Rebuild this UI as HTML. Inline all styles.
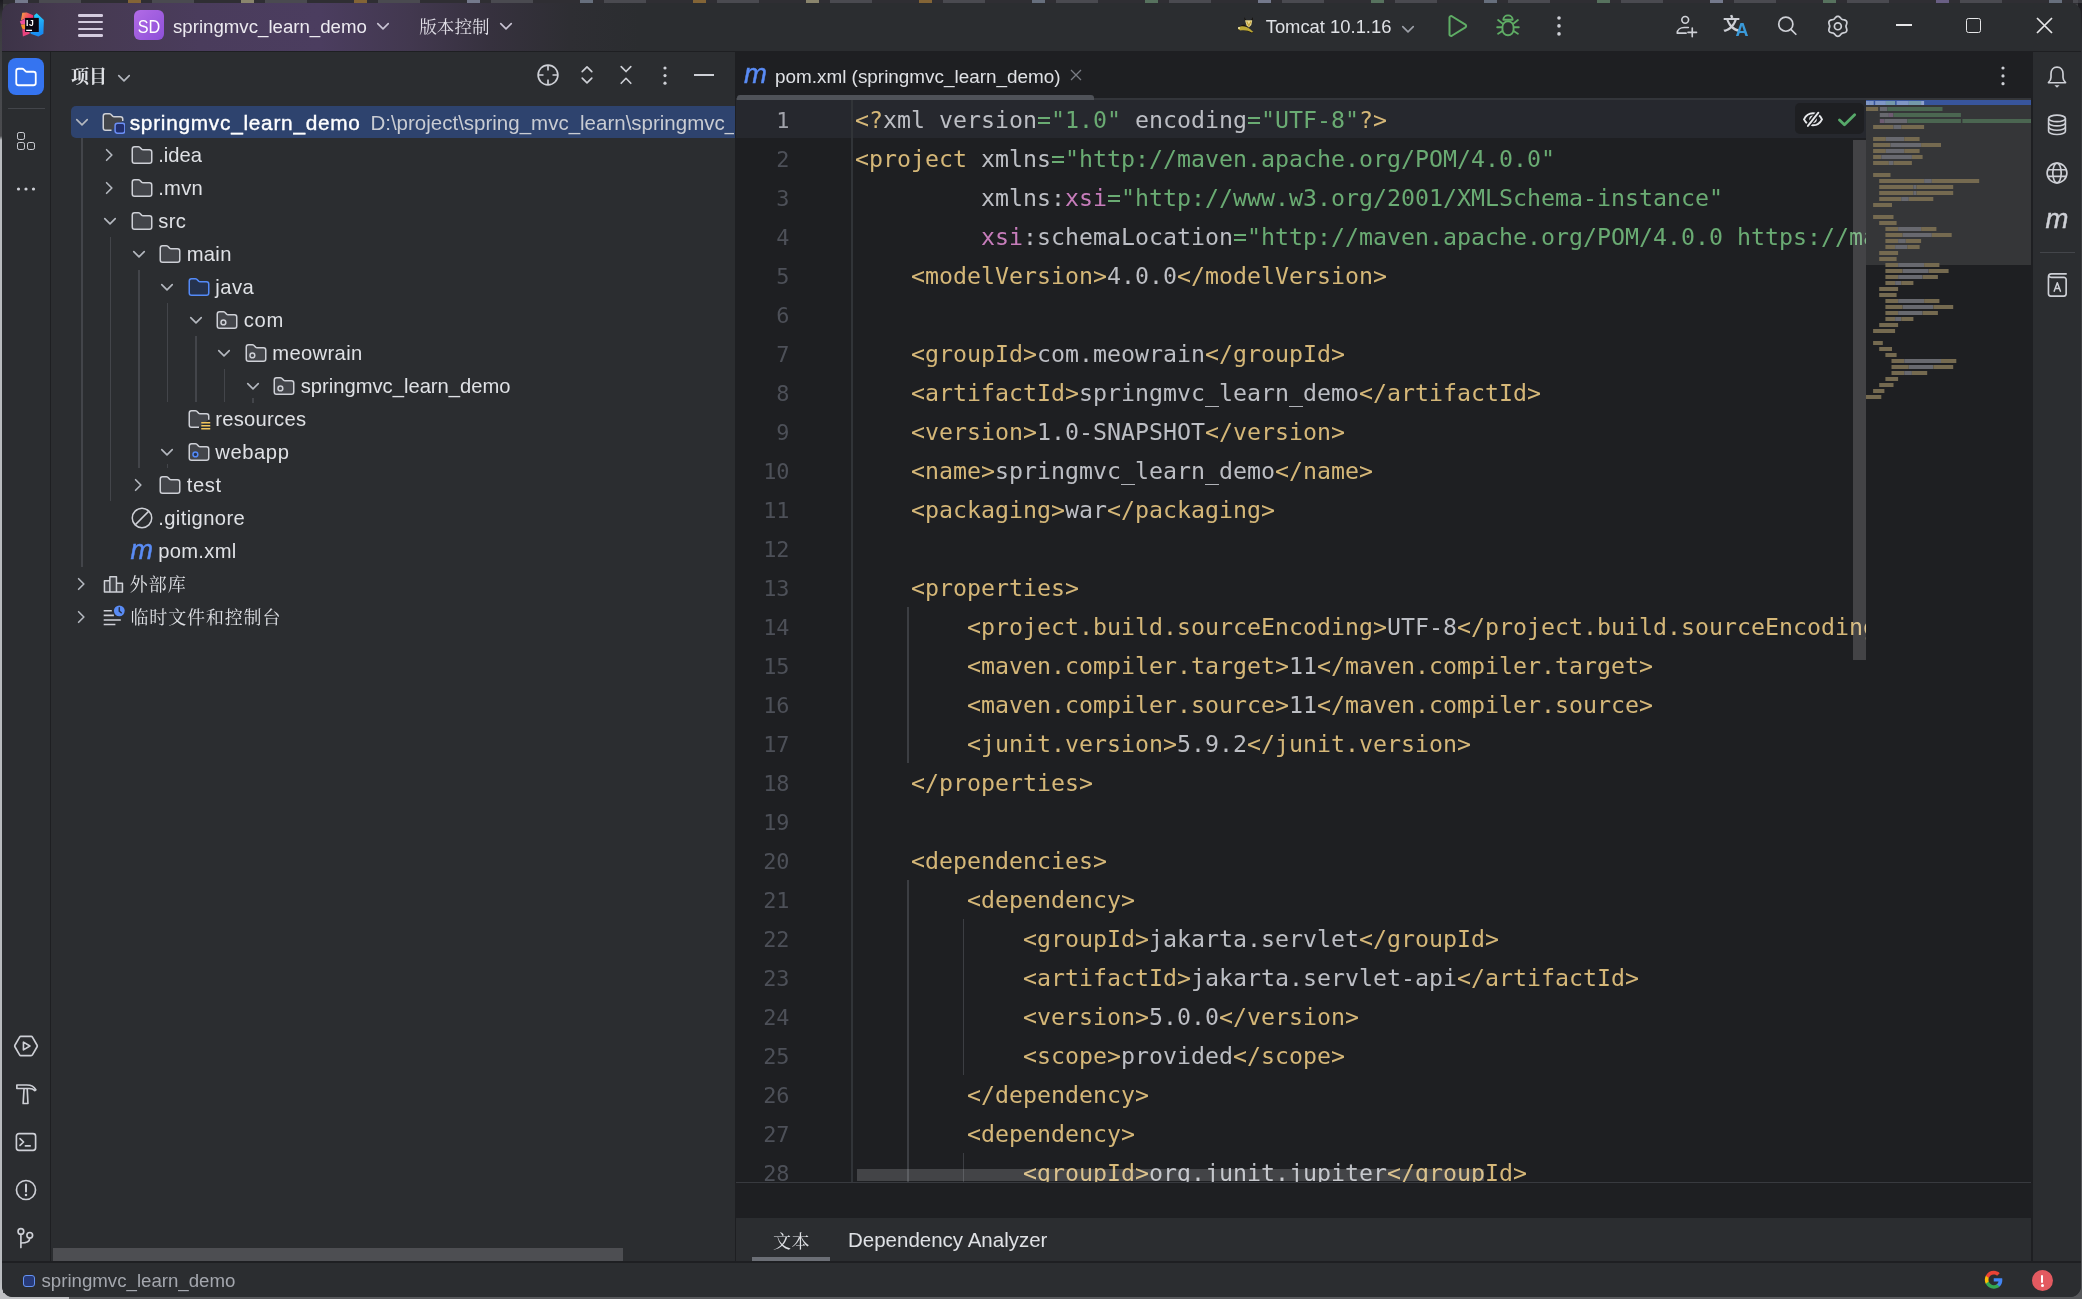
<!DOCTYPE html>
<html><head><meta charset="utf-8"><title>pom.xml - springmvc_learn_demo</title>
<style>
html,body{margin:0;padding:0;}
body{width:2082px;height:1299px;overflow:hidden;position:relative;background:#3e3f42;font-family:'Liberation Sans', 'Noto Serif CJK SC', sans-serif;}
div,span,svg{box-sizing:border-box;}
.abs{position:absolute;}
.t{position:absolute;white-space:pre;line-height:1;}
.win{position:absolute;left:2px;top:3px;width:2079px;height:1293.5px;border-radius:11px;background:#2B2D30;overflow:hidden;}
.code{position:absolute;left:855px;white-space:pre;font-family:'DejaVu Sans Mono', 'Liberation Mono', monospace;font-size:23.25px;letter-spacing:0.003px;height:39px;line-height:39px;color:#BCBEC4;}
.ln{position:absolute;left:736px;width:53.5px;text-align:right;font-family:'DejaVu Sans Mono', 'Liberation Mono', monospace;font-size:21.9px;height:39px;line-height:39px;color:#4B5059;}
.tg{color:#D5B778}.st{color:#6AAB73}.ns{color:#C77DBB}
.row{position:absolute;white-space:pre;font-size:20.2px;margin-left:-0.6px;color:#DFE1E5;line-height:33px;height:33px;}
</style></head><body>

<div class="abs" style="left:0;top:0;width:2082px;height:4px;background:#2f2e33"></div>
<div class="abs" style="left:0;top:0;width:3px;height:1299px;background:linear-gradient(180deg,#1c1b20 0,#3a3a3e 20px,#48494d 100px,#4a4b4e 136px,#b9bbbf 140px,#b9bbbf 1280px,#c8c9cc 1299px)"></div>
<div class="abs" style="left:0;top:1293px;width:70px;height:6px;background:#bfc0c3"></div>
<div class="abs" style="left:69px;top:1294px;width:2013px;height:5px;background:#57585b"></div>
<div class="abs" style="left:2078px;top:0;width:4px;height:1299px;background:linear-gradient(180deg,#1c1b20 0,#2d2e31 40px,#3a3b3e 160px,#57585b 1200px)"></div>
<div class="abs" style="left:15px;top:0;width:13px;height:2.5px;background:#b9c4e6;opacity:.5"></div>
<div class="abs" style="left:39px;top:0;width:42px;height:2.5px;background:#8a8a94;opacity:.3"></div>
<div class="abs" style="left:128px;top:0;width:13px;height:2.5px;background:#d89a3a;opacity:.5"></div>
<div class="abs" style="left:152px;top:0;width:42px;height:2.5px;background:#8a8a94;opacity:.3"></div>
<div class="abs" style="left:241px;top:0;width:13px;height:2.5px;background:#e6dca8;opacity:.5"></div>
<div class="abs" style="left:265px;top:0;width:42px;height:2.5px;background:#8a8a94;opacity:.3"></div>
<div class="abs" style="left:354px;top:0;width:13px;height:2.5px;background:#d89a3a;opacity:.5"></div>
<div class="abs" style="left:378px;top:0;width:42px;height:2.5px;background:#8a8a94;opacity:.3"></div>
<div class="abs" style="left:467px;top:0;width:13px;height:2.5px;background:#b9c4e6;opacity:.5"></div>
<div class="abs" style="left:491px;top:0;width:42px;height:2.5px;background:#8a8a94;opacity:.3"></div>
<div class="abs" style="left:580px;top:0;width:13px;height:2.5px;background:#9fb0c8;opacity:.5"></div>
<div class="abs" style="left:604px;top:0;width:42px;height:2.5px;background:#8a8a94;opacity:.3"></div>
<div class="abs" style="left:693px;top:0;width:13px;height:2.5px;background:#d89a3a;opacity:.5"></div>
<div class="abs" style="left:717px;top:0;width:42px;height:2.5px;background:#8a8a94;opacity:.3"></div>
<div class="abs" style="left:806px;top:0;width:13px;height:2.5px;background:#e6dca8;opacity:.5"></div>
<div class="abs" style="left:830px;top:0;width:42px;height:2.5px;background:#8a8a94;opacity:.3"></div>
<div class="abs" style="left:919px;top:0;width:13px;height:2.5px;background:#d89a3a;opacity:.5"></div>
<div class="abs" style="left:943px;top:0;width:42px;height:2.5px;background:#8a8a94;opacity:.3"></div>
<div class="abs" style="left:1032px;top:0;width:13px;height:2.5px;background:#9fb0c8;opacity:.5"></div>
<div class="abs" style="left:1056px;top:0;width:42px;height:2.5px;background:#8a8a94;opacity:.3"></div>
<div class="abs" style="left:1145px;top:0;width:13px;height:2.5px;background:#7fb58a;opacity:.5"></div>
<div class="abs" style="left:1169px;top:0;width:42px;height:2.5px;background:#8a8a94;opacity:.3"></div>
<div class="abs" style="left:1258px;top:0;width:13px;height:2.5px;background:#b9c4e6;opacity:.5"></div>
<div class="abs" style="left:1282px;top:0;width:42px;height:2.5px;background:#8a8a94;opacity:.3"></div>
<div class="abs" style="left:1371px;top:0;width:13px;height:2.5px;background:#7fb58a;opacity:.5"></div>
<div class="abs" style="left:1395px;top:0;width:42px;height:2.5px;background:#8a8a94;opacity:.3"></div>
<div class="abs" style="left:1484px;top:0;width:13px;height:2.5px;background:#9fb0c8;opacity:.5"></div>
<div class="abs" style="left:1508px;top:0;width:42px;height:2.5px;background:#8a8a94;opacity:.3"></div>
<div class="abs" style="left:1597px;top:0;width:13px;height:2.5px;background:#7fb58a;opacity:.5"></div>
<div class="abs" style="left:1621px;top:0;width:42px;height:2.5px;background:#8a8a94;opacity:.3"></div>
<div class="abs" style="left:1710px;top:0;width:13px;height:2.5px;background:#b9c4e6;opacity:.5"></div>
<div class="abs" style="left:1734px;top:0;width:42px;height:2.5px;background:#8a8a94;opacity:.3"></div>
<div class="abs" style="left:1823px;top:0;width:13px;height:2.5px;background:#7fb58a;opacity:.5"></div>
<div class="abs" style="left:1847px;top:0;width:42px;height:2.5px;background:#8a8a94;opacity:.3"></div>
<div class="abs" style="left:1936px;top:0;width:13px;height:2.5px;background:#a48fd6;opacity:.5"></div>
<div class="abs" style="left:1960px;top:0;width:42px;height:2.5px;background:#8a8a94;opacity:.3"></div>
<div class="abs" style="left:2049px;top:0;width:13px;height:2.5px;background:#9fb0c8;opacity:.5"></div>
<div class="abs" style="left:2073px;top:0;width:42px;height:2.5px;background:#8a8a94;opacity:.3"></div>
<div class="win">
<div class="abs" style="left:-2px;top:-3px;width:2082px;height:1299px;will-change:transform;">
<div class="abs" style="left:0;top:0;width:2082px;height:51px;background:linear-gradient(90deg,#3c3347 0,#45394f 60px,#4a3c5c 200px,#4b3d5f 320px,#42384f 410px,#36313e 490px,#2e2e33 570px,#2B2D30 640px)"></div>
<div class="abs" style="left:0;top:51px;width:2082px;height:1px;background:#1E1F22"></div>
<svg style="position:absolute;left:19px;top:11px;" width="27" height="27" viewBox="0 0 27 27" fill="none"><defs><linearGradient id="lgA" x1="0" y1="0" x2="1" y2="0.3"><stop offset="0" stop-color="#F9B03C"/><stop offset=".45" stop-color="#F4685A"/><stop offset="1" stop-color="#EE2F6E"/></linearGradient><linearGradient id="lgB" x1="0.3" y1="0" x2="0.5" y2="1"><stop offset="0" stop-color="#25D6FD"/><stop offset=".5" stop-color="#1EA4F6"/><stop offset="1" stop-color="#1787F0"/></linearGradient></defs><path d="M3.3 1.7L7.8 1.4L14.1 4.2V7.4H6.1L1.9 9.4Z" fill="url(#lgA)"/><path d="M0.8 10.5L6.3 7.8V13.4H2.2Z" fill="#F0509C"/><path d="M1.9 13.8L6.3 13.2V18.4L3.3 17.7Z" fill="#F7902E"/><path d="M3.3 18.2H6.3V20.8H10.6V22.7L3.9 25.5Z" fill="#E8447E"/><path d="M15.2 4.2L17.7 2.2L24.9 8.9L24.4 22.7L19.4 25.5L11.6 22.7V20.8H19.5V6.9H15.2Z" fill="url(#lgB)"/><rect x="6.1" y="6.9" width="13.6" height="14.1" fill="#0A0712"/><text x="7" y="14.5" font-family="Liberation Sans, sans-serif" font-weight="bold" font-size="8.6" letter-spacing=".5" fill="#fff">IJ</text><rect x="7.2" y="18.7" width="5.8" height="1.3" fill="#fff"/></svg>
<div class="abs" style="left:78px;top:14.3px;width:25px;height:2.4px;border-radius:1.2px;background:#d4ccdf"></div>
<div class="abs" style="left:78px;top:21.0px;width:25px;height:2.4px;border-radius:1.2px;background:#d4ccdf"></div>
<div class="abs" style="left:78px;top:27.8px;width:25px;height:2.4px;border-radius:1.2px;background:#d4ccdf"></div>
<div class="abs" style="left:78px;top:34.4px;width:25px;height:2.4px;border-radius:1.2px;background:#d4ccdf"></div>
<div class="abs" style="left:134px;top:10px;width:30px;height:29.5px;border-radius:6px;background:linear-gradient(135deg,#b26be6,#8d50d8)"></div>
<div class="t" style="left:134px;top:18px;width:30px;text-align:center;font-size:18px;letter-spacing:0px;color:#fff;transform:scaleX(.9);">SD</div>
<div class="t" style="left:173px;top:18px;font-size:18.66px;color:#ECEAF0;">springmvc_learn_demo</div>
<svg style="position:absolute;left:371.3px;top:13.5px;" width="24.0" height="24.0" viewBox="0 0 16 16" fill="none"><path d="M4.5 6.4L8 9.9L11.5 6.4" stroke="#c9c4d4" stroke-width="1.1" stroke-linecap="round" stroke-linejoin="round"/></svg>
<div class="t" style="left:419.2px;top:19.2px;font-size:17.6px;color:#E0DEE6;font-family:'Liberation Sans', 'Noto Serif CJK SC', serif">版本控制</div>
<svg style="position:absolute;left:494.0px;top:14.0px;" width="24.0" height="24.0" viewBox="0 0 16 16" fill="none"><path d="M4.5 6.4L8 9.9L11.5 6.4" stroke="#c9c4d4" stroke-width="1.1" stroke-linecap="round" stroke-linejoin="round"/></svg>
<svg style="position:absolute;left:1233px;top:16px;" width="22" height="20" viewBox="0 0 22 20" fill="none"><path d="M11 1L13.3 4.3H18L20 1L19.6 5L12 5Z" fill="#15110a"/><path d="M4.6 14.2C8 13.2 14 14.200 18.5 17.200L20.500 16.600L14 10.800L11 8.500L8 9.500Z" fill="#140e08" opacity=".85"/><path d="M5 11.700C7.800 9.800 11 9.900 13.500 11C16.200 12.300 18.700 14.300 20.400 15.900L18.600 16.500C15.500 14.500 11 13.700 7.600 14.500L5.400 13.600Z" fill="#BBA735"/><path d="M12 4.300H19.300L18.300 9L15.800 11.600L13.500 9.300Z" fill="#E6D88F"/><path d="M13.700 5.400L15.800 9.700L18 5.400" stroke="#C29E38" stroke-width="1.1" fill="none"/><circle cx="6" cy="11.900" r="1" fill="#EFE6B0"/></svg>
<div class="t" style="left:1265.7px;top:17.8px;font-size:18.4px;color:#DFE1E5;">Tomcat 10.1.16</div>
<svg style="position:absolute;left:1395.7px;top:16.5px;" width="24.0" height="24.0" viewBox="0 0 16 16" fill="none"><path d="M4.5 6.4L8 9.9L11.5 6.4" stroke="#9DA0A8" stroke-width="1.1" stroke-linecap="round" stroke-linejoin="round"/></svg>
<svg style="position:absolute;left:1442px;top:10.7px;" width="30" height="30" viewBox="0 0 20 20" fill="none"><path d="M5 4.4C5 3.6 5.85 3.1 6.55 3.5L15.6 9.1C16.25 9.5 16.25 10.5 15.6 10.9L6.55 16.5C5.85 16.9 5 16.4 5 15.6V4.4Z" stroke="#5FAD65" stroke-width="1.35" stroke-linejoin="round"/></svg>
<svg style="position:absolute;left:1493px;top:10px;" width="30" height="30" viewBox="0 0 20 20" fill="none"><path d="M6.900 6.500C6.900 4.800 8.300 3.600 10 3.600C11.700 3.600 13.100 4.800 13.100 6.500Z" stroke="#5FAD65" stroke-width="1.25" stroke-linejoin="round"/><rect x="6.300" y="7.500" width="7.400" height="9.300" rx="3.700" stroke="#5FAD65" stroke-width="1.25"/><path d="M3.400 6.700L6.100 8.800M16.600 6.700L13.900 8.800M2.800 11.500H5.800M17.200 11.500H14.200M3.400 15.800L6.300 14M16.600 15.800L13.700 14" stroke="#5FAD65" stroke-width="1.25" stroke-linecap="round"/></svg>
<svg style="position:absolute;left:1554.9px;top:13.7px;" width="8" height="23.900000000000002" viewBox="0 0 8 23.900000000000002" fill="none"><circle cx="4" cy="4.00" r="1.8" fill="#CED0D6"/><circle cx="4" cy="11.90" r="1.8" fill="#CED0D6"/><circle cx="4" cy="19.90" r="1.8" fill="#CED0D6"/></svg>
<svg style="position:absolute;left:1672px;top:11px;" width="30" height="30" viewBox="0 0 20 20" fill="none"><circle cx="8.8" cy="5.9" r="2.25" stroke="#CED0D6" stroke-width="1.1"/><path d="M9.4 14.75H3.5C3.5 12.5 5.5 11 8.2 11H10.9" stroke="#CED0D6" stroke-width="1.1" stroke-linecap="round" stroke-linejoin="round"/><path d="M13.5 11.4V17.1M10.65 14.25H16.35" stroke="#CED0D6" stroke-width="1.1" stroke-linecap="round"/></svg>
<div class="t" style="left:1723px;top:14px;font-size:17px;font-weight:bold;color:#CED0D6;font-family:'Noto Sans CJK SC',sans-serif;">文</div>
<div class="t" style="left:1735.5px;top:20.5px;font-size:18px;font-weight:bold;color:#3A9AD9;">A</div>
<svg style="position:absolute;left:1772px;top:11px;" width="30" height="30" viewBox="0 0 20 20" fill="none"><circle cx="9.2" cy="8.8" r="4.7" stroke="#CED0D6" stroke-width="1.15"/><path d="M12.6 12.2L15.9 15.5" stroke="#CED0D6" stroke-width="1.15" stroke-linecap="round"/></svg>
<svg style="position:absolute;left:1823px;top:10.5px;" width="30" height="30" viewBox="0 0 20 20" fill="none"><path d="M9.90 3.53 L10.33 3.59 L10.75 3.77 L11.13 4.03 L11.47 4.36 L11.77 4.70 L12.05 5.02 L12.32 5.29 L12.62 5.50 L12.94 5.65 L13.32 5.75 L13.73 5.83 L14.18 5.92 L14.63 6.05 L15.05 6.25 L15.41 6.52 L15.68 6.86 L15.84 7.27 L15.89 7.72 L15.85 8.18 L15.74 8.63 L15.60 9.07 L15.46 9.47 L15.37 9.84 L15.33 10.20 L15.37 10.56 L15.46 10.93 L15.60 11.33 L15.74 11.77 L15.85 12.22 L15.89 12.68 L15.84 13.13 L15.68 13.53 L15.41 13.88 L15.05 14.15 L14.63 14.35 L14.18 14.48 L13.73 14.57 L13.32 14.65 L12.94 14.75 L12.62 14.90 L12.32 15.11 L12.05 15.38 L11.77 15.70 L11.47 16.04 L11.13 16.37 L10.75 16.63 L10.33 16.81 L9.90 16.87 L9.47 16.81 L9.05 16.63 L8.67 16.37 L8.33 16.04 L8.03 15.70 L7.75 15.38 L7.48 15.11 L7.19 14.90 L6.86 14.75 L6.48 14.65 L6.07 14.57 L5.62 14.48 L5.17 14.35 L4.75 14.15 L4.39 13.88 L4.12 13.54 L3.96 13.13 L3.91 12.68 L3.95 12.22 L4.06 11.77 L4.20 11.33 L4.34 10.93 L4.43 10.56 L4.47 10.20 L4.43 9.84 L4.34 9.47 L4.20 9.07 L4.06 8.63 L3.95 8.18 L3.91 7.72 L3.96 7.27 L4.12 6.86 L4.39 6.52 L4.75 6.25 L5.17 6.05 L5.62 5.92 L6.07 5.83 L6.48 5.75 L6.86 5.65 L7.18 5.50 L7.48 5.29 L7.75 5.02 L8.03 4.70 L8.33 4.36 L8.67 4.03 L9.05 3.77 L9.47 3.59Z" stroke="#CED0D6" stroke-width="1.15" stroke-linejoin="round"/><circle cx="9.9" cy="10.2" r="2.3" stroke="#CED0D6" stroke-width="1.15"/></svg>
<div class="abs" style="left:1896px;top:24px;width:15.5px;height:1.7px;background:#E6E6E8"></div>
<div class="abs" style="left:1966px;top:18px;width:15px;height:15px;border:1.7px solid #E6E6E8;border-radius:2.5px"></div>
<svg style="position:absolute;left:2036px;top:17px;" width="17" height="17" viewBox="0 0 17 17" fill="none"><path d="M1 1L16 16M16 1L1 16" stroke="#E6E6E8" stroke-width="1.7"/></svg>
<div class="abs" style="left:0;top:52px;width:50px;height:1210px;background:#2B2D30"></div>
<div class="abs" style="left:50px;top:52px;width:1px;height:1210px;background:#1E1F22"></div>
<div class="abs" style="left:8px;top:58px;width:36px;height:36.5px;border-radius:8px;background:#3574F0"></div>
<svg style="position:absolute;left:11px;top:61.8px;" width="30" height="30" viewBox="0 0 20 20" fill="none"><path d="M3.5 6C3.5 5.17 4.17 4.5 5 4.5H7.5C7.85 4.5 8.2 4.65 8.45 4.9L9.6 6.05C9.85 6.3 10.2 6.5 10.6 6.5H15C15.83 6.5 16.5 7.17 16.5 8V14C16.5 14.83 15.83 15.5 15 15.5H5C4.17 15.5 3.5 14.83 3.5 14V6Z" stroke="#fff" stroke-width="1.2"/></svg>
<div class="abs" style="left:8px;top:107.5px;width:36.5px;height:1.5px;background:#43454A"></div>
<div class="abs" style="left:17px;top:132px;width:8.2px;height:8.2px;border:1.5px solid #CED0D6;border-radius:2.2px"></div>
<div class="abs" style="left:17px;top:142.3px;width:8.2px;height:8.2px;border:1.5px solid #CED0D6;border-radius:2.2px"></div>
<div class="abs" style="left:27.2px;top:142.3px;width:8.2px;height:8.2px;border:1.5px solid #CED0D6;border-radius:2.2px"></div>
<svg style="position:absolute;left:14px;top:184.9px;" width="24" height="8" viewBox="0 0 24 8" fill="none"><circle cx="4.5" cy="4" r="1.6" fill="#CED0D6"/><circle cx="12" cy="4" r="1.6" fill="#CED0D6"/><circle cx="19.5" cy="4" r="1.6" fill="#CED0D6"/></svg>
<svg style="position:absolute;left:11px;top:1031.3px;" width="30" height="30" viewBox="0 0 20 20" fill="none"><path d="M6.6 3.6H13.4C13.75 3.6 14.1 3.8 14.27 4.1L17.4 9.5C17.57 9.8 17.57 10.2 17.4 10.5L14.27 15.9C14.1 16.2 13.75 16.4 13.4 16.4H6.6C6.25 16.4 5.9 16.2 5.73 15.9L2.6 10.5C2.43 10.2 2.43 9.8 2.6 9.5L5.73 4.100C5.9 3.8 6.25 3.6 6.6 3.6Z" stroke="#CED0D6" stroke-width="1.1"/><path d="M8.3 7.4V12.6L12.6 10L8.3 7.4Z" stroke="#CED0D6" stroke-width="1.1" stroke-linejoin="round"/></svg>
<svg style="position:absolute;left:11px;top:1078.8px;" width="30" height="30" viewBox="0 0 20 20" fill="none"><path d="M3.9 6.35V4H10.6C13.4 4 15.5 5.2 16.6 7.2L15.9 7.7C14.9 6.7 13.6 6.35 12.2 6.35H3.9Z" stroke="#CED0D6" stroke-width="1.1" stroke-linejoin="round"/><path d="M8.7 6.35L8.1 16.3H11.3L10.8 6.35" stroke="#CED0D6" stroke-width="1.1" stroke-linejoin="round"/></svg>
<svg style="position:absolute;left:11px;top:1126.8px;" width="30" height="30" viewBox="0 0 20 20" fill="none"><rect x="3.6" y="4.45" width="12.8" height="11.1" rx="1.7" stroke="#CED0D6" stroke-width="1.1"/><path d="M6 7.7L8.4 10L6 12.300" stroke="#CED0D6" stroke-width="1.1" stroke-linecap="round" stroke-linejoin="round"/><path d="M9.6 12.6H12.8" stroke="#CED0D6" stroke-width="1.1" stroke-linecap="round"/></svg>
<svg style="position:absolute;left:11px;top:1174.6px;" width="30" height="30" viewBox="0 0 20 20" fill="none"><circle cx="10" cy="10" r="6.35" stroke="#CED0D6" stroke-width="1.1"/><path d="M10 6.3V11" stroke="#CED0D6" stroke-width="1.3" stroke-linecap="round"/><circle cx="10" cy="13.3" r=".85" fill="#CED0D6"/></svg>
<svg style="position:absolute;left:11px;top:1223.2px;" width="30" height="30" viewBox="0 0 20 20" fill="none"><circle cx="6.600" cy="5.600" r="1.9" stroke="#CED0D6" stroke-width="1.1"/><circle cx="12.5" cy="8.2" r="1.9" stroke="#CED0D6" stroke-width="1.1"/><path d="M6.600 7.500V16.400" stroke="#CED0D6" stroke-width="1.1" stroke-linecap="round"/><path d="M12.500 10.100C12.500 12.300 11 13.300 6.600 13.300" stroke="#CED0D6" stroke-width="1.1"/></svg>
<div class="abs" style="left:51px;top:52px;width:684px;height:1210px;background:#2B2D30"></div>
<div class="t" style="left:71px;top:68px;font-size:18px;color:#DFE1E5;font-family:'Liberation Sans', 'Noto Serif CJK SC', serif;font-weight:700">项目</div>
<svg style="position:absolute;left:112.3px;top:65.5px;" width="24.0" height="24.0" viewBox="0 0 16 16" fill="none"><path d="M4.5 6.4L8 9.9L11.5 6.4" stroke="#B4B8BF" stroke-width="1.1" stroke-linecap="round" stroke-linejoin="round"/></svg>
<svg style="position:absolute;left:533.2px;top:60px;" width="30" height="30" viewBox="0 0 20 20" fill="none"><circle cx="10" cy="10" r="6.6" stroke="#CED0D6" stroke-width="1.1"/><path d="M10 3.4V7M10 13V16.600M3.4 10H7M13 10H16.600" stroke="#CED0D6" stroke-width="1.1"/></svg>
<svg style="position:absolute;left:572px;top:60px;" width="30" height="30" viewBox="0 0 20 20" fill="none"><path d="M6.800 7.800L10 4.600L13.200 7.800M6.800 12.100L10 15.300L13.200 12.100" stroke="#CED0D6" stroke-width="1.1" stroke-linecap="round" stroke-linejoin="round"/></svg>
<svg style="position:absolute;left:611px;top:60px;" width="30" height="30" viewBox="0 0 20 20" fill="none"><path d="M6.800 4.400L10 7.700L13.200 4.400M6.800 15.500L10 12.200L13.200 15.500" stroke="#CED0D6" stroke-width="1.1" stroke-linecap="round" stroke-linejoin="round"/></svg>
<svg style="position:absolute;left:661.3px;top:63.599999999999994px;" width="8" height="23.200000000000003" viewBox="0 0 8 23.200000000000003" fill="none"><circle cx="4" cy="4.00" r="1.6" fill="#CED0D6"/><circle cx="4" cy="11.60" r="1.6" fill="#CED0D6"/><circle cx="4" cy="19.20" r="1.6" fill="#CED0D6"/></svg>
<div class="abs" style="left:694px;top:74px;width:19.5px;height:2px;background:#CED0D6"></div>
<div class="abs" style="left:70.5px;top:105.5px;width:665px;height:32.5px;border-radius:5px 0 0 5px;background:#2E436E"></div>
<div class="abs" style="left:81px;top:138px;width:1.5px;height:429px;background:#43454A"></div>
<div class="abs" style="left:109.5px;top:237px;width:1.5px;height:264px;background:#43454A"></div>
<div class="abs" style="left:138px;top:270px;width:1.5px;height:198px;background:#43454A"></div>
<div class="abs" style="left:166.5px;top:303px;width:1.5px;height:99px;background:#43454A"></div>
<div class="abs" style="left:195px;top:336px;width:1.5px;height:66px;background:#43454A"></div>
<div class="abs" style="left:223.5px;top:369px;width:1.5px;height:33px;background:#43454A"></div>
<div class="abs" style="left:252px;top:398px;width:1.5px;height:5px;background:#43454A"></div>
<div class="abs" style="left:166.5px;top:464px;width:1.5px;height:4px;background:#43454A"></div>
<svg style="position:absolute;left:69.70000000000002px;top:110.3px;" width="24.0" height="24.0" viewBox="0 0 16 16" fill="none"><path d="M4.5 6.4L8 9.9L11.5 6.4" stroke="#B4B8BF" stroke-width="1.1" stroke-linecap="round" stroke-linejoin="round"/></svg>
<svg style="position:absolute;left:101.30000000000001px;top:109.5px;" width="24" height="24" viewBox="0 0 16 16" fill="none"><path d="M7 13.5H3C2.17 13.5 1.5 12.83 1.5 12V4C1.5 3.17 2.17 2.5 3 2.5H5.55C5.9 2.5 6.25 2.63 6.5 2.87L7.75 4.1C8 4.36 8.35 4.5 8.7 4.5H13C13.83 4.5 14.5 5.17 14.5 6V7.4" fill="#43454A" stroke="#CED0D6"/><rect x="9.4" y="8.9" width="6.5" height="6.6" rx="1.6" fill="#22306E" stroke="#6B8EF5"/></svg>
<div class="row" style="left:130.3px;top:105.5px;"><span style="color:#fff;font-size:20.8px;letter-spacing:0.74px;-webkit-text-stroke:0.38px #fff">springmvc_learn_demo</span></div>
<svg style="position:absolute;left:97.30000000000001px;top:142.8px;" width="24.0" height="24.0" viewBox="0 0 16 16" fill="none"><path d="M6.4 4.5L9.9 8L6.4 11.5" stroke="#B4B8BF" stroke-width="1.1" stroke-linecap="round" stroke-linejoin="round"/></svg>
<svg style="position:absolute;left:129.8px;top:142.5px;" width="24" height="24" viewBox="0 0 16 16" fill="none"><path d="M1.5 4C1.5 3.17 2.17 2.5 3 2.5H5.55C5.9 2.5 6.25 2.63 6.5 2.87L7.75 4.1C8 4.36 8.35 4.5 8.7 4.5H13C13.83 4.5 14.5 5.17 14.5 6V12C14.5 12.83 13.83 13.5 13 13.5H3C2.17 13.5 1.5 12.83 1.5 12V4Z" fill="#43454A" stroke="#CED0D6"/></svg>
<div class="row" style="left:158.8px;top:138.5px;">.idea</div>
<svg style="position:absolute;left:97.30000000000001px;top:175.8px;" width="24.0" height="24.0" viewBox="0 0 16 16" fill="none"><path d="M6.4 4.5L9.9 8L6.4 11.5" stroke="#B4B8BF" stroke-width="1.1" stroke-linecap="round" stroke-linejoin="round"/></svg>
<svg style="position:absolute;left:129.8px;top:175.5px;" width="24" height="24" viewBox="0 0 16 16" fill="none"><path d="M1.5 4C1.5 3.17 2.17 2.5 3 2.5H5.55C5.9 2.5 6.25 2.63 6.5 2.87L7.75 4.1C8 4.36 8.35 4.5 8.7 4.5H13C13.83 4.5 14.5 5.17 14.5 6V12C14.5 12.83 13.83 13.5 13 13.5H3C2.17 13.5 1.5 12.83 1.5 12V4Z" fill="#43454A" stroke="#CED0D6"/></svg>
<div class="row" style="left:158.8px;top:171.5px;"><span style="letter-spacing:0.25px">.mvn</span></div>
<svg style="position:absolute;left:98.20000000000002px;top:209.3px;" width="24.0" height="24.0" viewBox="0 0 16 16" fill="none"><path d="M4.5 6.4L8 9.9L11.5 6.4" stroke="#B4B8BF" stroke-width="1.1" stroke-linecap="round" stroke-linejoin="round"/></svg>
<svg style="position:absolute;left:129.8px;top:208.5px;" width="24" height="24" viewBox="0 0 16 16" fill="none"><path d="M1.5 4C1.5 3.17 2.17 2.5 3 2.5H5.55C5.9 2.5 6.25 2.63 6.5 2.87L7.75 4.1C8 4.36 8.35 4.5 8.7 4.5H13C13.83 4.5 14.5 5.17 14.5 6V12C14.5 12.83 13.83 13.5 13 13.5H3C2.17 13.5 1.5 12.83 1.5 12V4Z" fill="#43454A" stroke="#CED0D6"/></svg>
<div class="row" style="left:158.8px;top:204.5px;"><span style="letter-spacing:0.35px">src</span></div>
<svg style="position:absolute;left:126.70000000000002px;top:242.3px;" width="24.0" height="24.0" viewBox="0 0 16 16" fill="none"><path d="M4.5 6.4L8 9.9L11.5 6.4" stroke="#B4B8BF" stroke-width="1.1" stroke-linecap="round" stroke-linejoin="round"/></svg>
<svg style="position:absolute;left:158.3px;top:241.5px;" width="24" height="24" viewBox="0 0 16 16" fill="none"><path d="M1.5 4C1.5 3.17 2.17 2.5 3 2.5H5.55C5.9 2.5 6.25 2.63 6.5 2.87L7.75 4.1C8 4.36 8.35 4.5 8.7 4.5H13C13.83 4.5 14.5 5.17 14.5 6V12C14.5 12.83 13.83 13.5 13 13.5H3C2.17 13.5 1.5 12.83 1.5 12V4Z" fill="#43454A" stroke="#CED0D6"/></svg>
<div class="row" style="left:187.3px;top:237.5px;"><span style="letter-spacing:0.3px">main</span></div>
<svg style="position:absolute;left:155.20000000000002px;top:275.3px;" width="24.0" height="24.0" viewBox="0 0 16 16" fill="none"><path d="M4.5 6.4L8 9.9L11.5 6.4" stroke="#B4B8BF" stroke-width="1.1" stroke-linecap="round" stroke-linejoin="round"/></svg>
<svg style="position:absolute;left:186.8px;top:274.5px;" width="24" height="24" viewBox="0 0 16 16" fill="none"><path d="M1.5 4C1.5 3.17 2.17 2.5 3 2.5H5.55C5.9 2.5 6.25 2.63 6.5 2.87L7.75 4.1C8 4.36 8.35 4.5 8.7 4.5H13C13.83 4.5 14.5 5.17 14.5 6V12C14.5 12.83 13.83 13.5 13 13.5H3C2.17 13.5 1.5 12.83 1.5 12V4Z" fill="#25324D" stroke="#548AF7"/></svg>
<div class="row" style="left:215.8px;top:270.5px;"><span style="letter-spacing:0.5px">java</span></div>
<svg style="position:absolute;left:183.70000000000002px;top:308.3px;" width="24.0" height="24.0" viewBox="0 0 16 16" fill="none"><path d="M4.5 6.4L8 9.9L11.5 6.4" stroke="#B4B8BF" stroke-width="1.1" stroke-linecap="round" stroke-linejoin="round"/></svg>
<svg style="position:absolute;left:215.3px;top:307.5px;" width="24" height="24" viewBox="0 0 16 16" fill="none"><path d="M1.5 4C1.5 3.17 2.17 2.5 3 2.5H5.55C5.9 2.5 6.25 2.63 6.5 2.87L7.75 4.1C8 4.36 8.35 4.5 8.7 4.5H13C13.83 4.5 14.5 5.17 14.5 6V12C14.5 12.83 13.83 13.5 13 13.5H3C2.17 13.5 1.5 12.83 1.5 12V4Z" fill="#43454A" stroke="#CED0D6"/><circle cx="5.6" cy="9.6" r="1.6" stroke="#CED0D6" fill="none"/></svg>
<div class="row" style="left:244.3px;top:303.5px;"><span style="letter-spacing:0.8px">com</span></div>
<svg style="position:absolute;left:212.20000000000002px;top:341.3px;" width="24.0" height="24.0" viewBox="0 0 16 16" fill="none"><path d="M4.5 6.4L8 9.9L11.5 6.4" stroke="#B4B8BF" stroke-width="1.1" stroke-linecap="round" stroke-linejoin="round"/></svg>
<svg style="position:absolute;left:243.8px;top:340.5px;" width="24" height="24" viewBox="0 0 16 16" fill="none"><path d="M1.5 4C1.5 3.17 2.17 2.5 3 2.5H5.55C5.9 2.5 6.25 2.63 6.5 2.87L7.75 4.1C8 4.36 8.35 4.5 8.7 4.5H13C13.83 4.5 14.5 5.17 14.5 6V12C14.5 12.83 13.83 13.5 13 13.5H3C2.17 13.5 1.5 12.83 1.5 12V4Z" fill="#43454A" stroke="#CED0D6"/><circle cx="5.6" cy="9.6" r="1.6" stroke="#CED0D6" fill="none"/></svg>
<div class="row" style="left:272.8px;top:336.5px;"><span style="letter-spacing:0.36px">meowrain</span></div>
<svg style="position:absolute;left:240.70000000000002px;top:374.3px;" width="24.0" height="24.0" viewBox="0 0 16 16" fill="none"><path d="M4.5 6.4L8 9.9L11.5 6.4" stroke="#B4B8BF" stroke-width="1.1" stroke-linecap="round" stroke-linejoin="round"/></svg>
<svg style="position:absolute;left:272.3px;top:373.5px;" width="24" height="24" viewBox="0 0 16 16" fill="none"><path d="M1.5 4C1.5 3.17 2.17 2.5 3 2.5H5.55C5.9 2.5 6.25 2.63 6.5 2.87L7.75 4.1C8 4.36 8.35 4.5 8.7 4.5H13C13.83 4.5 14.5 5.17 14.5 6V12C14.5 12.83 13.83 13.5 13 13.5H3C2.17 13.5 1.5 12.83 1.5 12V4Z" fill="#43454A" stroke="#CED0D6"/><circle cx="5.6" cy="9.6" r="1.6" stroke="#CED0D6" fill="none"/></svg>
<div class="row" style="left:301.3px;top:369.5px;">springmvc_learn_demo</div>
<svg style="position:absolute;left:186.8px;top:406.5px;" width="24" height="24" viewBox="0 0 16 16" fill="none"><path d="M8 13.5H3C2.17 13.5 1.5 12.83 1.5 12V4C1.5 3.17 2.17 2.5 3 2.5H5.55C5.9 2.5 6.25 2.63 6.5 2.87L7.75 4.1C8 4.36 8.35 4.5 8.7 4.5H13C13.83 4.5 14.5 5.17 14.5 6V8.5" fill="#43454A" stroke="#CED0D6"/><path d="M9.5 10.5H15.5M9.5 12.5H15.5M9.5 14.5H15.5" stroke="#F2C55C" stroke-width="1.1"/></svg>
<div class="row" style="left:215.8px;top:402.5px;"><span style="letter-spacing:0.27px">resources</span></div>
<svg style="position:absolute;left:155.20000000000002px;top:440.3px;" width="24.0" height="24.0" viewBox="0 0 16 16" fill="none"><path d="M4.5 6.4L8 9.9L11.5 6.4" stroke="#B4B8BF" stroke-width="1.1" stroke-linecap="round" stroke-linejoin="round"/></svg>
<svg style="position:absolute;left:186.8px;top:439.5px;" width="24" height="24" viewBox="0 0 16 16" fill="none"><path d="M1.5 4C1.5 3.17 2.17 2.5 3 2.5H5.55C5.9 2.5 6.25 2.63 6.5 2.87L7.75 4.1C8 4.36 8.35 4.5 8.7 4.5H13C13.83 4.5 14.5 5.17 14.5 6V12C14.5 12.83 13.83 13.5 13 13.5H3C2.17 13.5 1.5 12.83 1.5 12V4Z" fill="#43454A" stroke="#CED0D6"/><circle cx="5.6" cy="9.6" r="1.6" stroke="#548AF7" fill="#25324D"/></svg>
<div class="row" style="left:215.8px;top:435.5px;"><span style="letter-spacing:0.6px">webapp</span></div>
<svg style="position:absolute;left:125.80000000000001px;top:472.8px;" width="24.0" height="24.0" viewBox="0 0 16 16" fill="none"><path d="M6.4 4.5L9.9 8L6.4 11.5" stroke="#B4B8BF" stroke-width="1.1" stroke-linecap="round" stroke-linejoin="round"/></svg>
<svg style="position:absolute;left:158.3px;top:472.5px;" width="24" height="24" viewBox="0 0 16 16" fill="none"><path d="M1.5 4C1.5 3.17 2.17 2.5 3 2.5H5.55C5.9 2.5 6.25 2.63 6.5 2.87L7.75 4.1C8 4.36 8.35 4.5 8.7 4.5H13C13.83 4.5 14.5 5.17 14.5 6V12C14.5 12.83 13.83 13.5 13 13.5H3C2.17 13.5 1.5 12.83 1.5 12V4Z" fill="#43454A" stroke="#CED0D6"/></svg>
<div class="row" style="left:187.3px;top:468.5px;"><span style="letter-spacing:0.6px">test</span></div>
<svg style="position:absolute;left:129.8px;top:505.5px;" width="24" height="24" viewBox="0 0 16 16" fill="none"><circle cx="8" cy="8" r="6.5" stroke="#CED0D6"/><path d="M3.6 12.4L12.4 3.6" stroke="#CED0D6"/></svg>
<div class="row" style="left:158.8px;top:501.5px;"><span style="letter-spacing:0.4px">.gitignore</span></div>
<div class="t" style="left:130.60000000000002px;top:536.5px;font-size:27px;font-style:italic;color:#5A8CF5;-webkit-text-stroke:0.45px #5A8CF5;letter-spacing:-1px;line-height:27px;">m</div>
<div class="row" style="left:158.8px;top:534.5px;"><span style="letter-spacing:0.3px">pom.xml</span></div>
<svg style="position:absolute;left:68.80000000000001px;top:571.8px;" width="24.0" height="24.0" viewBox="0 0 16 16" fill="none"><path d="M6.4 4.5L9.9 8L6.4 11.5" stroke="#B4B8BF" stroke-width="1.1" stroke-linecap="round" stroke-linejoin="round"/></svg>
<svg style="position:absolute;left:101.30000000000001px;top:571.5px;" width="24" height="24" viewBox="0 0 16 16" fill="none"><path d="M2.3 13.3V5.9H5.9V13.3Z M5.9 13.3V3.2H10.3V13.3Z M10.3 13.3V7.5H14.3V13.3Z" fill="#43454A" stroke="#CED0D6" stroke-linejoin="round"/></svg>
<div class="row" style="left:130.3px;top:567.5px;"><span style="font-family:'Liberation Sans', 'Noto Serif CJK SC', serif;font-size:18px;letter-spacing:1px">外部库</span></div>
<svg style="position:absolute;left:68.80000000000001px;top:604.8px;" width="24.0" height="24.0" viewBox="0 0 16 16" fill="none"><path d="M6.4 4.5L9.9 8L6.4 11.5" stroke="#B4B8BF" stroke-width="1.1" stroke-linecap="round" stroke-linejoin="round"/></svg>
<svg style="position:absolute;left:101.30000000000001px;top:604.5px;" width="24" height="24" viewBox="0 0 16 16" fill="none"><path d="M1.8 3.8H7.2M1.8 6.9H8.6M1.8 10H13.2M1.8 13H9.6" stroke="#CED0D6" stroke-width="1.1"/><circle cx="12.2" cy="3.9" r="3.6" fill="#5A8CF5"/><path d="M12.2 1.9V4.1L13.5 5.2" stroke="#25324D" stroke-width="1" stroke-linecap="round" fill="none"/></svg>
<div class="row" style="left:130.3px;top:600.5px;"><span style="font-family:'Liberation Sans', 'Noto Serif CJK SC', serif;font-size:18px;letter-spacing:.85px;margin-left:.8px">临时文件和控制台</span></div>
<div class="row" style="left:371px;top:105.5px;width:364px;overflow:hidden;color:#C9CCD3;font-size:20.5px">D:\project\spring_mvc_learn\springmvc_learn_demo</div>
<div class="abs" style="left:53px;top:1248px;width:570px;height:12.5px;background:#4D4E52"></div>
<div class="abs" style="left:735px;top:52px;width:1.5px;height:1210px;background:#1E1F22"></div>
<div class="abs" style="left:736px;top:52px;width:1296px;height:1210px;background:#1E1F22"></div>
<div class="t" style="left:744px;top:60px;font-size:27.5px;font-style:italic;color:#5A8CF5;-webkit-text-stroke:0.45px #5A8CF5;line-height:27.5px;letter-spacing:-1px">m</div>
<div class="t" style="left:775px;top:67.5px;font-size:18.9px;color:#DFE1E5;">pom.xml (springmvc_learn_demo)</div>
<svg style="position:absolute;left:1069px;top:68px;" width="14" height="14" viewBox="0 0 14 14" fill="none"><path d="M2 2L12 12M12 2L2 12" stroke="#7A7D85" stroke-width="1.3"/></svg>
<div class="abs" style="left:736px;top:98px;width:1296px;height:2px;background:#33353A"></div>
<div class="abs" style="left:737px;top:94.5px;width:357px;height:5.5px;border-radius:3px 3px 0 0;background:#4F5258"></div>
<svg style="position:absolute;left:1998.6px;top:63.599999999999994px;" width="8" height="23.700000000000003" viewBox="0 0 8 23.700000000000003" fill="none"><circle cx="4" cy="4.00" r="1.6" fill="#CED0D6"/><circle cx="4" cy="11.90" r="1.6" fill="#CED0D6"/><circle cx="4" cy="19.70" r="1.6" fill="#CED0D6"/></svg>
<div class="abs" style="left:736px;top:100px;width:1130px;height:1082px;overflow:hidden;">
<div class="abs" style="left:-736px;top:-100px;width:2082px;height:1299px;">
<div class="abs" style="left:736px;top:100px;width:1130px;height:38px;background:#26282E"></div>
<div class="abs" style="left:851px;top:100px;width:1.5px;height:1082px;background:#313438"></div>
<div class="abs" style="left:906.8px;top:607px;width:1.8px;height:156px;background:#3C3E43"></div>
<div class="abs" style="left:906.8px;top:880px;width:1.8px;height:302px;background:#3C3E43"></div>
<div class="abs" style="left:962.5px;top:919px;width:1.8px;height:156px;background:#3C3E43"></div>
<div class="abs" style="left:962.5px;top:1153px;width:1.8px;height:29px;background:#3C3E43"></div>
<div class="ln" style="top:100.5px;color:#A1A3AB">1</div>
<div class="code" style="top:100px"><span class="tg">&lt;?</span>xml version<span class="st">=&quot;1.0&quot;</span> encoding<span class="st">=&quot;UTF-8&quot;</span><span class="tg">?&gt;</span></div>
<div class="ln" style="top:139.5px;color:#4D5058">2</div>
<div class="code" style="top:139px"><span class="tg">&lt;project</span> xmlns<span class="st">=&quot;http://maven.apache.org/POM/4.0.0&quot;</span></div>
<div class="ln" style="top:178.5px;color:#4D5058">3</div>
<div class="code" style="top:178px">         xmlns:<span class="ns">xsi</span><span class="st">=&quot;http://www.w3.org/2001/XMLSchema-instance&quot;</span></div>
<div class="ln" style="top:217.5px;color:#4D5058">4</div>
<div class="code" style="top:217px">         <span class="ns">xsi</span>:schemaLocation<span class="st">=&quot;http://maven.apache.org/POM/4.0.0 https://maven.apache.org/xsd/maven-4.0.0.xsd&quot;</span><span class="tg">&gt;</span></div>
<div class="ln" style="top:256.5px;color:#4D5058">5</div>
<div class="code" style="top:256px">    <span class="tg">&lt;modelVersion&gt;</span>4.0.0<span class="tg">&lt;/modelVersion&gt;</span></div>
<div class="ln" style="top:295.5px;color:#4D5058">6</div>
<div class="ln" style="top:334.5px;color:#4D5058">7</div>
<div class="code" style="top:334px">    <span class="tg">&lt;groupId&gt;</span>com.meowrain<span class="tg">&lt;/groupId&gt;</span></div>
<div class="ln" style="top:373.5px;color:#4D5058">8</div>
<div class="code" style="top:373px">    <span class="tg">&lt;artifactId&gt;</span>springmvc_learn_demo<span class="tg">&lt;/artifactId&gt;</span></div>
<div class="ln" style="top:412.5px;color:#4D5058">9</div>
<div class="code" style="top:412px">    <span class="tg">&lt;version&gt;</span>1.0-SNAPSHOT<span class="tg">&lt;/version&gt;</span></div>
<div class="ln" style="top:451.5px;color:#4D5058">10</div>
<div class="code" style="top:451px">    <span class="tg">&lt;name&gt;</span>springmvc_learn_demo<span class="tg">&lt;/name&gt;</span></div>
<div class="ln" style="top:490.5px;color:#4D5058">11</div>
<div class="code" style="top:490px">    <span class="tg">&lt;packaging&gt;</span>war<span class="tg">&lt;/packaging&gt;</span></div>
<div class="ln" style="top:529.5px;color:#4D5058">12</div>
<div class="ln" style="top:568.5px;color:#4D5058">13</div>
<div class="code" style="top:568px">    <span class="tg">&lt;properties&gt;</span></div>
<div class="ln" style="top:607.5px;color:#4D5058">14</div>
<div class="code" style="top:607px">        <span class="tg">&lt;project.build.sourceEncoding&gt;</span>UTF-8<span class="tg">&lt;/project.build.sourceEncoding&gt;</span></div>
<div class="ln" style="top:646.5px;color:#4D5058">15</div>
<div class="code" style="top:646px">        <span class="tg">&lt;maven.compiler.target&gt;</span>11<span class="tg">&lt;/maven.compiler.target&gt;</span></div>
<div class="ln" style="top:685.5px;color:#4D5058">16</div>
<div class="code" style="top:685px">        <span class="tg">&lt;maven.compiler.source&gt;</span>11<span class="tg">&lt;/maven.compiler.source&gt;</span></div>
<div class="ln" style="top:724.5px;color:#4D5058">17</div>
<div class="code" style="top:724px">        <span class="tg">&lt;junit.version&gt;</span>5.9.2<span class="tg">&lt;/junit.version&gt;</span></div>
<div class="ln" style="top:763.5px;color:#4D5058">18</div>
<div class="code" style="top:763px">    <span class="tg">&lt;/properties&gt;</span></div>
<div class="ln" style="top:802.5px;color:#4D5058">19</div>
<div class="ln" style="top:841.5px;color:#4D5058">20</div>
<div class="code" style="top:841px">    <span class="tg">&lt;dependencies&gt;</span></div>
<div class="ln" style="top:880.5px;color:#4D5058">21</div>
<div class="code" style="top:880px">        <span class="tg">&lt;dependency&gt;</span></div>
<div class="ln" style="top:919.5px;color:#4D5058">22</div>
<div class="code" style="top:919px">            <span class="tg">&lt;groupId&gt;</span>jakarta.servlet<span class="tg">&lt;/groupId&gt;</span></div>
<div class="ln" style="top:958.5px;color:#4D5058">23</div>
<div class="code" style="top:958px">            <span class="tg">&lt;artifactId&gt;</span>jakarta.servlet-api<span class="tg">&lt;/artifactId&gt;</span></div>
<div class="ln" style="top:997.5px;color:#4D5058">24</div>
<div class="code" style="top:997px">            <span class="tg">&lt;version&gt;</span>5.0.0<span class="tg">&lt;/version&gt;</span></div>
<div class="ln" style="top:1036.5px;color:#4D5058">25</div>
<div class="code" style="top:1036px">            <span class="tg">&lt;scope&gt;</span>provided<span class="tg">&lt;/scope&gt;</span></div>
<div class="ln" style="top:1075.5px;color:#4D5058">26</div>
<div class="code" style="top:1075px">        <span class="tg">&lt;/dependency&gt;</span></div>
<div class="ln" style="top:1114.5px;color:#4D5058">27</div>
<div class="code" style="top:1114px">        <span class="tg">&lt;dependency&gt;</span></div>
<div class="ln" style="top:1153.5px;color:#4D5058">28</div>
<div class="code" style="top:1153px">            <span class="tg">&lt;groupId&gt;</span>org.junit.jupiter<span class="tg">&lt;/groupId&gt;</span></div>
<div class="abs" style="left:857px;top:1169px;width:627px;height:12.3px;background:rgba(255,255,255,0.17)"></div>
</div></div>
<div class="abs" style="left:736px;top:1182px;width:1296px;height:1.2px;background:#383A3F"></div>
<div class="abs" style="left:1853px;top:140px;width:12.5px;height:519.5px;background:rgba(255,255,255,0.165)"></div>
<div class="abs" style="left:1795px;top:103px;width:68.5px;height:31px;border-radius:5px;background:#1E1F22"></div>
<svg style="position:absolute;left:1801px;top:107px;" width="24" height="24" viewBox="0 0 16 16" fill="none"><path d="M2 8.2C3.3 5.6 5.5 4.2 8 4.2C10.500 4.2 12.700 5.6 14 8.2C12.700 10.800 10.500 12.200 8 12.200C5.500 12.200 3.300 10.800 2 8.200Z" stroke="#E8E9EC" stroke-width="1.25"/><circle cx="8" cy="8.2" r="2" stroke="#E8E9EC" stroke-width="1.1"/><path d="M4.2 13L11.900 3.400" stroke="#1E1F22" stroke-width="3.2"/><path d="M4.600 12.600L11.600 3.800" stroke="#E8E9EC" stroke-width="1.25" stroke-linecap="round"/></svg>
<svg style="position:absolute;left:1834.5px;top:107px;" width="24" height="24" viewBox="0 0 16 16" fill="none"><path d="M3 8.700L6.300 11.800L13.100 5.100" stroke="#57A96A" stroke-width="1.9" stroke-linecap="round" stroke-linejoin="round"/></svg>
<div class="abs" style="left:1866px;top:99px;width:166px;height:166px;background:#353638"></div>
<div class="abs" style="left:1866px;top:99.5px;width:166px;height:5.5px;background:#38559C"></div>
<svg style="position:absolute;left:1866px;top:99px;" width="166" height="310" viewBox="0 0 166 310" fill="none"><rect x="0" y="2" width="3.1" height="4" fill="#8097C6"/><rect x="3.1" y="2" width="4.6" height="4" fill="#8097C6"/><rect x="9.2" y="2" width="10.7" height="4" fill="#8097C6"/><rect x="19.9" y="2" width="9.200000000000003" height="4" fill="#7499AA"/><rect x="30.6" y="2" width="12.199999999999996" height="4" fill="#8097C6"/><rect x="42.8" y="2" width="12.300000000000004" height="4" fill="#7499AA"/><rect x="55.1" y="2" width="3.0" height="4" fill="#8EA2CE"/><rect x="0" y="8" width="12.2" height="4" fill="#756A50"/><rect x="13.8" y="8" width="7.599999999999998" height="4" fill="#68696F"/><rect x="21.4" y="8" width="55.1" height="4" fill="#4B6651"/><rect x="13.8" y="14" width="9.099999999999998" height="4" fill="#68696F"/><rect x="22.9" y="14" width="4.600000000000001" height="4" fill="#6E5C72"/><rect x="27.5" y="14" width="67.4" height="4" fill="#4B6651"/><rect x="13.8" y="20" width="4.599999999999998" height="4" fill="#6E5C72"/><rect x="18.4" y="20" width="22.9" height="4" fill="#68696F"/><rect x="41.3" y="20" width="53.60000000000001" height="4" fill="#4B6651"/><rect x="96.4" y="20" width="69.6" height="4" fill="#4B6651"/><rect x="7.1" y="26" width="20.4" height="4" fill="#756A50"/><rect x="27.5" y="26" width="7.700000000000003" height="4" fill="#68696F"/><rect x="35.2" y="26" width="22.9" height="4" fill="#756A50"/><rect x="7.1" y="38" width="12.799999999999999" height="4" fill="#756A50"/><rect x="19.9" y="38" width="18.300000000000004" height="4" fill="#68696F"/><rect x="38.2" y="38" width="15.399999999999999" height="4" fill="#756A50"/><rect x="7.1" y="44" width="17.4" height="4" fill="#756A50"/><rect x="24.5" y="44" width="30.6" height="4" fill="#68696F"/><rect x="55.1" y="44" width="19.9" height="4" fill="#756A50"/><rect x="7.1" y="50" width="12.799999999999999" height="4" fill="#756A50"/><rect x="19.9" y="50" width="18.300000000000004" height="4" fill="#68696F"/><rect x="38.2" y="50" width="15.399999999999999" height="4" fill="#756A50"/><rect x="7.1" y="56" width="8.200000000000001" height="4" fill="#756A50"/><rect x="15.3" y="56" width="30.599999999999998" height="4" fill="#68696F"/><rect x="45.9" y="56" width="10.700000000000003" height="4" fill="#756A50"/><rect x="7.1" y="62" width="15.799999999999999" height="4" fill="#756A50"/><rect x="22.9" y="62" width="4.600000000000001" height="4" fill="#68696F"/><rect x="27.5" y="62" width="18.4" height="4" fill="#756A50"/><rect x="7.1" y="74" width="17.4" height="4" fill="#756A50"/><rect x="13.2" y="80" width="44.900000000000006" height="4" fill="#756A50"/><rect x="58.1" y="80" width="7.699999999999996" height="4" fill="#68696F"/><rect x="65.8" y="80" width="47.400000000000006" height="4" fill="#756A50"/><rect x="13.2" y="86" width="34.2" height="4" fill="#756A50"/><rect x="47.4" y="86" width="3.1000000000000014" height="4" fill="#68696F"/><rect x="50.5" y="86" width="36.7" height="4" fill="#756A50"/><rect x="13.2" y="92" width="34.2" height="4" fill="#756A50"/><rect x="47.4" y="92" width="3.1000000000000014" height="4" fill="#68696F"/><rect x="50.5" y="92" width="36.7" height="4" fill="#756A50"/><rect x="13.2" y="98" width="22.000000000000004" height="4" fill="#756A50"/><rect x="35.2" y="98" width="7.599999999999994" height="4" fill="#68696F"/><rect x="42.8" y="98" width="24.5" height="4" fill="#756A50"/><rect x="7.1" y="104" width="18.9" height="4" fill="#756A50"/><rect x="7.1" y="116" width="20.4" height="4" fill="#756A50"/><rect x="13.2" y="122" width="17.400000000000002" height="4" fill="#756A50"/><rect x="19.4" y="128" width="12.700000000000003" height="4" fill="#756A50"/><rect x="32.1" y="128" width="23.0" height="4" fill="#68696F"/><rect x="55.1" y="128" width="15.300000000000004" height="4" fill="#756A50"/><rect x="19.4" y="134" width="17.300000000000004" height="4" fill="#756A50"/><rect x="36.7" y="134" width="29.099999999999994" height="4" fill="#68696F"/><rect x="65.8" y="134" width="19.900000000000006" height="4" fill="#756A50"/><rect x="19.4" y="140" width="12.700000000000003" height="4" fill="#756A50"/><rect x="32.1" y="140" width="7.699999999999996" height="4" fill="#68696F"/><rect x="39.8" y="140" width="15.300000000000004" height="4" fill="#756A50"/><rect x="19.4" y="146" width="9.700000000000003" height="4" fill="#756A50"/><rect x="29.1" y="146" width="12.199999999999996" height="4" fill="#68696F"/><rect x="41.3" y="146" width="12.300000000000004" height="4" fill="#756A50"/><rect x="13.2" y="152" width="18.900000000000002" height="4" fill="#756A50"/><rect x="13.2" y="158" width="17.400000000000002" height="4" fill="#756A50"/><rect x="19.4" y="164" width="12.700000000000003" height="4" fill="#756A50"/><rect x="32.1" y="164" width="26.0" height="4" fill="#68696F"/><rect x="58.1" y="164" width="15.300000000000004" height="4" fill="#756A50"/><rect x="19.4" y="170" width="17.300000000000004" height="4" fill="#756A50"/><rect x="36.7" y="170" width="26.0" height="4" fill="#68696F"/><rect x="62.7" y="170" width="19.89999999999999" height="4" fill="#756A50"/><rect x="19.4" y="176" width="12.700000000000003" height="4" fill="#756A50"/><rect x="32.1" y="176" width="24.5" height="4" fill="#68696F"/><rect x="56.6" y="176" width="15.300000000000004" height="4" fill="#756A50"/><rect x="19.4" y="182" width="9.700000000000003" height="4" fill="#756A50"/><rect x="29.1" y="182" width="6.100000000000001" height="4" fill="#68696F"/><rect x="35.2" y="182" width="12.199999999999996" height="4" fill="#756A50"/><rect x="13.2" y="188" width="18.900000000000002" height="4" fill="#756A50"/><rect x="13.2" y="194" width="17.400000000000002" height="4" fill="#756A50"/><rect x="19.4" y="200" width="12.700000000000003" height="4" fill="#756A50"/><rect x="32.1" y="200" width="26.0" height="4" fill="#68696F"/><rect x="58.1" y="200" width="15.300000000000004" height="4" fill="#756A50"/><rect x="19.4" y="206" width="17.300000000000004" height="4" fill="#756A50"/><rect x="36.7" y="206" width="30.599999999999994" height="4" fill="#68696F"/><rect x="67.3" y="206" width="19.900000000000006" height="4" fill="#756A50"/><rect x="19.4" y="212" width="12.700000000000003" height="4" fill="#756A50"/><rect x="32.1" y="212" width="24.5" height="4" fill="#68696F"/><rect x="56.6" y="212" width="15.300000000000004" height="4" fill="#756A50"/><rect x="19.4" y="218" width="9.700000000000003" height="4" fill="#756A50"/><rect x="29.1" y="218" width="6.100000000000001" height="4" fill="#68696F"/><rect x="35.2" y="218" width="12.199999999999996" height="4" fill="#756A50"/><rect x="13.2" y="224" width="18.900000000000002" height="4" fill="#756A50"/><rect x="7.1" y="230" width="22.0" height="4" fill="#756A50"/><rect x="7.1" y="242" width="9.700000000000001" height="4" fill="#756A50"/><rect x="13.2" y="248" width="12.8" height="4" fill="#756A50"/><rect x="19.4" y="254" width="11.200000000000003" height="4" fill="#756A50"/><rect x="25.5" y="260" width="12.700000000000003" height="4" fill="#756A50"/><rect x="38.2" y="260" width="36.8" height="4" fill="#68696F"/><rect x="75.0" y="260" width="15.299999999999997" height="4" fill="#756A50"/><rect x="25.5" y="266" width="17.299999999999997" height="4" fill="#756A50"/><rect x="42.8" y="266" width="24.5" height="4" fill="#68696F"/><rect x="67.3" y="266" width="19.900000000000006" height="4" fill="#756A50"/><rect x="25.5" y="272" width="12.700000000000003" height="4" fill="#756A50"/><rect x="38.2" y="272" width="7.699999999999996" height="4" fill="#68696F"/><rect x="45.9" y="272" width="15.300000000000004" height="4" fill="#756A50"/><rect x="19.4" y="278" width="12.700000000000003" height="4" fill="#756A50"/><rect x="13.2" y="284" width="14.3" height="4" fill="#756A50"/><rect x="7.1" y="290" width="11.299999999999999" height="4" fill="#756A50"/><rect x="0" y="296" width="15.3" height="4" fill="#756A50"/></svg>
<div class="abs" style="left:736px;top:1217.5px;width:1296px;height:44.500px;background:#2B2D30"></div>
<div class="t" style="left:773px;top:1232.5px;font-size:18px;color:#DFE1E5;font-family:'Liberation Sans', 'Noto Serif CJK SC', serif;letter-spacing:.6px">文本</div>
<div class="abs" style="left:752px;top:1257px;width:78px;height:3.5px;background:#6B6E75"></div>
<div class="t" style="left:848px;top:1230px;font-size:20.5px;color:#DFE1E5;">Dependency Analyzer</div>
<div class="abs" style="left:2031px;top:52px;width:1.5px;height:1210px;background:#1E1F22"></div>
<div class="abs" style="left:2032.5px;top:52px;width:50px;height:1210px;background:#2B2D30"></div>
<svg style="position:absolute;left:2042px;top:62px;" width="30" height="30" viewBox="0 0 20 20" fill="none"><path d="M10 3.4C7.5 3.4 6 5.3 6 7.8V10.4C6 11.8 5.300 12.800 4.300 13.800H15.700C14.700 12.800 14 11.800 14 10.400V7.800C14 5.300 12.500 3.400 10 3.400Z" stroke="#CED0D6" stroke-width="1.1" stroke-linejoin="round"/><path d="M8.300 15.500H11.700L10 17.100Z" fill="#CED0D6"/></svg>
<svg style="position:absolute;left:2042px;top:110px;" width="30" height="30" viewBox="0 0 20 20" fill="none"><ellipse cx="10" cy="5.600" rx="5.600" ry="2.150" stroke="#CED0D6" stroke-width="1.1"/><path d="M4.400 5.600V14.200C4.400 15.400 6.900 16.350 10 16.350C13.100 16.350 15.600 15.400 15.600 14.200V5.600" stroke="#CED0D6" stroke-width="1.1"/><path d="M4.400 8.450C4.400 9.650 6.900 10.600 10 10.600C13.100 10.600 15.600 9.650 15.600 8.450M4.400 11.350C4.400 12.550 6.900 13.500 10 13.500C13.100 13.500 15.600 12.550 15.600 11.350" stroke="#CED0D6" stroke-width="1.1"/></svg>
<svg style="position:absolute;left:2042px;top:158px;" width="30" height="30" viewBox="0 0 20 20" fill="none"><circle cx="10" cy="10" r="6.600" stroke="#CED0D6" stroke-width="1.1"/><ellipse cx="10" cy="10" rx="2.800" ry="6.600" stroke="#CED0D6" stroke-width="1.1"/><path d="M3.700 7.800H16.300M3.700 12.200H16.300" stroke="#CED0D6" stroke-width="1.1"/></svg>
<div class="t" style="left:2045.5px;top:205px;font-size:27.5px;font-style:italic;color:#CED0D6;-webkit-text-stroke:0.4px #CED0D6;line-height:27.5px;letter-spacing:-1px">m</div>
<div class="abs" style="left:2040px;top:251.500px;width:35px;height:1.5px;background:#43454A"></div>
<svg style="position:absolute;left:2042px;top:270px;" width="30" height="30" viewBox="0 0 20 20" fill="none"><path d="M16.100 2.600H6.300C5.200 2.600 4.300 3.500 4.300 4.600V15.900C4.300 16.700 5 17.400 5.800 17.400H14.600C15.400 17.400 16.100 16.700 16.100 15.900V6.400C16.100 5.600 15.400 4.900 14.600 4.900H6.200C5.300 4.900 4.600 4.500 4.400 3.900" stroke="#CED0D6" stroke-width="1.1" stroke-linecap="round" stroke-linejoin="round"/><path d="M8.100 14.100L10.200 8.500L12.300 14.100M8.800 12.400H11.600" stroke="#CED0D6" stroke-width="1" stroke-linejoin="round" stroke-linecap="round"/></svg>
<div class="abs" style="left:0;top:1261px;width:2082px;height:1.5px;background:#1E1F22"></div>
<div class="abs" style="left:0;top:1262.5px;width:2082px;height:37px;background:#2B2D30"></div>
<div class="abs" style="left:23px;top:1275px;width:12px;height:12px;border:1.800px solid #6492F2;border-radius:3px;background:#273A78"></div>
<div class="t" style="left:41.500px;top:1271.500px;font-size:18.66px;color:#A4A7AE;">springmvc_learn_demo</div>
<svg style="position:absolute;left:1984.3px;top:1269.8px;" width="19.5" height="19.5" viewBox="0 0 48 48" fill="none"><path fill="#4285F4" d="M45.100 24.500c0-1.600-.100-3.100-.400-4.500H24v8.500h11.800c-.500 2.800-2.100 5.100-4.400 6.700v5.500h7.100c4.200-3.800 6.600-9.500 6.600-16.200z"/><path fill="#34A853" d="M24 46c5.900 0 10.900-2 14.500-5.300l-7.100-5.500c-2 1.300-4.500 2.100-7.400 2.100-5.700 0-10.500-3.800-12.300-9H4.400v5.700C8 41.100 15.400 46 24 46z"/><path fill="#FBBC05" d="M11.700 28.300c-.400-1.300-.700-2.800-.700-4.300s.300-2.900.700-4.300V14H4.400C2.900 17 2 20.400 2 24s.900 7 2.400 10l7.300-5.700z"/><path fill="#EA4335" d="M24 10.800c3.200 0 6.100 1.100 8.400 3.300l6.300-6.300C34.900 4.200 29.900 2 24 2 15.400 2 8 6.900 4.400 14l7.300 5.700c1.800-5.200 6.600-8.900 12.300-8.900z"/></svg>
<div class="abs" style="left:2031.5px;top:1270px;width:21px;height:21px;border-radius:50%;background:#E35A60"></div>
<div class="abs" style="left:2040.7px;top:1274.5px;width:2.600px;height:8px;border-radius:1.3px;background:#fff"></div>
<div class="abs" style="left:2040.5px;top:1284.100px;width:3px;height:3px;border-radius:50%;background:#fff"></div>
</div></div>
</body></html>
